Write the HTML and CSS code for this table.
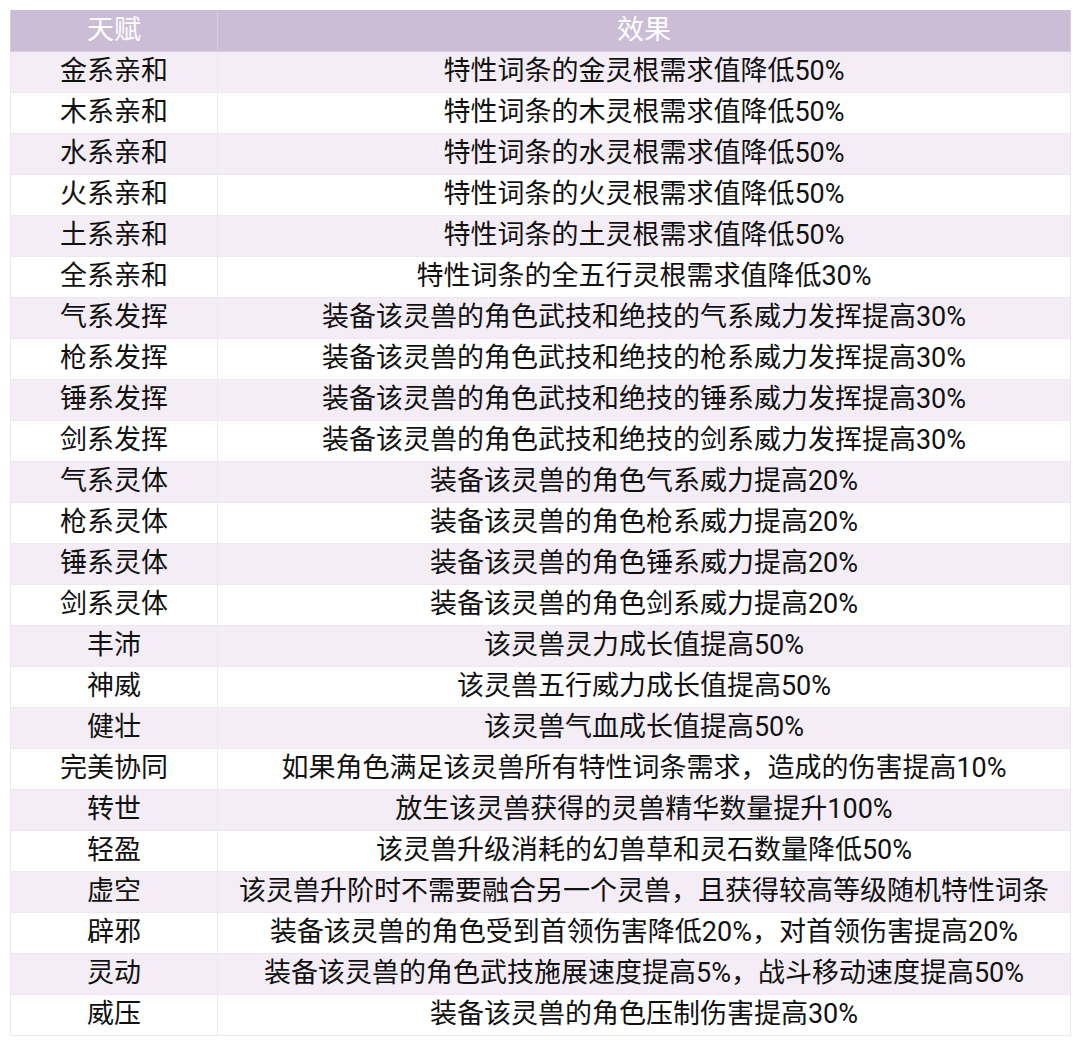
FILE: index.html
```html
<!DOCTYPE html>
<html lang="zh">
<head>
<meta charset="utf-8">
<link rel="stylesheet" href="styles.css">
</head>
<body>
<table class="talents">
  <colgroup><col class="c1"><col class="c2"></colgroup>
  <thead>
    <tr><th>天赋</th><th>效果</th></tr>
  </thead>
  <tbody>
    <tr><td>金系亲和</td><td>特性词条的金灵根需求值降低50%</td></tr>
    <tr><td>木系亲和</td><td>特性词条的木灵根需求值降低50%</td></tr>
    <tr><td>水系亲和</td><td>特性词条的水灵根需求值降低50%</td></tr>
    <tr><td>火系亲和</td><td>特性词条的火灵根需求值降低50%</td></tr>
    <tr><td>土系亲和</td><td>特性词条的土灵根需求值降低50%</td></tr>
    <tr><td>全系亲和</td><td>特性词条的全五行灵根需求值降低30%</td></tr>
    <tr><td>气系发挥</td><td>装备该灵兽的角色武技和绝技的气系威力发挥提高30%</td></tr>
    <tr><td>枪系发挥</td><td>装备该灵兽的角色武技和绝技的枪系威力发挥提高30%</td></tr>
    <tr><td>锤系发挥</td><td>装备该灵兽的角色武技和绝技的锤系威力发挥提高30%</td></tr>
    <tr><td>剑系发挥</td><td>装备该灵兽的角色武技和绝技的剑系威力发挥提高30%</td></tr>
    <tr><td>气系灵体</td><td>装备该灵兽的角色气系威力提高20%</td></tr>
    <tr><td>枪系灵体</td><td>装备该灵兽的角色枪系威力提高20%</td></tr>
    <tr><td>锤系灵体</td><td>装备该灵兽的角色锤系威力提高20%</td></tr>
    <tr><td>剑系灵体</td><td>装备该灵兽的角色剑系威力提高20%</td></tr>
    <tr><td>丰沛</td><td>该灵兽灵力成长值提高50%</td></tr>
    <tr><td>神威</td><td>该灵兽五行威力成长值提高50%</td></tr>
    <tr><td>健壮</td><td>该灵兽气血成长值提高50%</td></tr>
    <tr><td>完美协同</td><td>如果角色满足该灵兽所有特性词条需求，造成的伤害提高10%</td></tr>
    <tr><td>转世</td><td>放生该灵兽获得的灵兽精华数量提升100%</td></tr>
    <tr><td>轻盈</td><td>该灵兽升级消耗的幻兽草和灵石数量降低50%</td></tr>
    <tr><td>虚空</td><td>该灵兽升阶时不需要融合另一个灵兽，且获得较高等级随机特性词条</td></tr>
    <tr><td>辟邪</td><td>装备该灵兽的角色受到首领伤害降低20%，对首领伤害提高20%</td></tr>
    <tr><td>灵动</td><td>装备该灵兽的角色武技施展速度提高5%，战斗移动速度提高50%</td></tr>
    <tr><td>威压</td><td>装备该灵兽的角色压制伤害提高30%</td></tr>
  </tbody>
</table>
</body>
</html>
```
FILE: styles.css
```css
html, body {
  margin: 0;
  padding: 0;
  background: #ffffff;
}
body {
  padding: 10px 10px 0 10px;
  font-family: Roboto, "Noto Sans CJK SC", sans-serif;
}
.talents {
  width: 1060px;
  border-collapse: collapse;
  table-layout: fixed;
  font-size: 27px;
  color: #111111;
}
.c1 { width: 207px; }
.c2 { width: 853px; }
.talents th,
.talents td {
  height: 40px;
  box-sizing: border-box;
  padding: 0;
  text-align: center;
  vertical-align: middle;
  line-height: 1;
  white-space: nowrap;
  border: 1px solid #ede8ef;
}
.talents tr {
  height: 41px;
}
.talents th {
  background: #ccbdd7;
  color: #ffffff;
  font-weight: 400;
  border-color: #d8cde0;
  border-top: none;
}
.talents tbody tr:nth-child(odd) td {
  background: #f4edf6;
}
.talents tbody tr:nth-child(even) td {
  background: #ffffff;
}
```
